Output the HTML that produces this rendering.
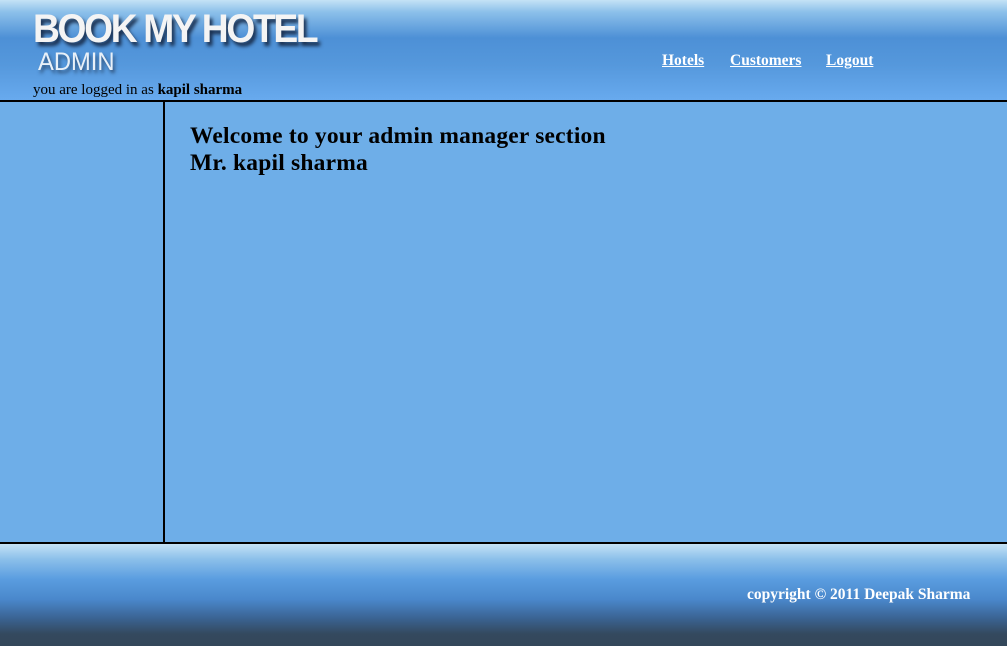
<!DOCTYPE html>
<html><head><style>
body{margin:0;width:1007px;height:644px;overflow:hidden;background:#6eaee8;font-family:"Liberation Serif",serif;position:relative}
#hd{position:absolute;left:0;top:0;width:1007px;height:100px;background:linear-gradient(#c4e2f6 0px,#8cc0ea 12px,#4d90d6 38px,#5598dc 65px,#68aaee 100px);border-bottom:2px solid #000}
#logo{position:absolute;left:33px;top:7px;font-family:"Liberation Sans",sans-serif;font-weight:bold;font-size:40px;letter-spacing:-2.5px;color:#f4f4f4;text-shadow:3px 4px 4px #1a3050;transform:scaleX(0.93);transform-origin:left}
#admin{position:absolute;left:38px;top:48px;font-family:"Liberation Sans",sans-serif;font-size:25px;color:#e8f0f8;text-shadow:2px 3px 4px #2a4a70;transform:scaleX(0.95);transform-origin:left}
#log{position:absolute;left:33px;top:82px;font-size:15px;color:#000}
#nav{position:absolute;top:52px;font-size:15.5px;font-weight:bold}
#nav a{position:absolute;color:#fff;text-decoration:underline;white-space:nowrap}
#side{position:absolute;left:163px;top:102px;width:2px;height:440px;background:#000}
#msg{position:absolute;left:190px;top:123px;font-size:23.5px;font-weight:bold;line-height:27px;color:#000;letter-spacing:0.2px}
#ft{position:absolute;left:0;top:542px;width:1007px;height:102px;border-top:2px solid #000;background:linear-gradient(#c4e2f6 0px,#8cc0ea 15px,#5a9de0 35px,#4a88cc 55px,#3a6290 75px,#34495e 90px,#33475a 102px)}
#cp{position:absolute;left:747px;top:42px;font-size:15.5px;font-weight:bold;color:#fff}
</style></head><body>
<div id="hd">
<div id="logo">BOOK MY HOTEL</div>
<div id="admin">ADMIN</div>
<div id="log">you are logged in as <b>kapil sharma</b></div>
<div id="nav"><a style="left:662px">Hotels</a><a style="left:730px">Customers</a><a style="left:826px">Logout</a></div>
</div>
<div id="side"></div>
<div id="msg">Welcome to your admin manager section<br>Mr. kapil sharma</div>
<div id="ft"><div id="cp">copyright © 2011 Deepak Sharma</div></div>
</body></html>
